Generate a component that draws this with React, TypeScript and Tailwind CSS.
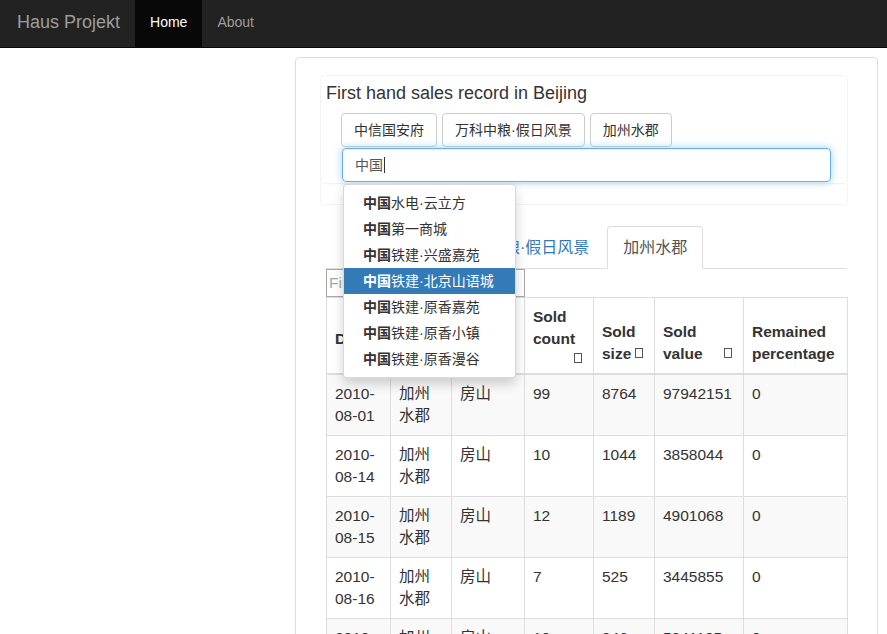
import React from 'react';

const font = "font-['Liberation_Sans','Noto_Sans_CJK_SC',sans-serif]";

const tabs = ['中信国安府', '万科中粮·假日风景', '加州水郡'];

const suggestions = [
  '水电·云立方',
  '第一商城',
  '铁建·兴盛嘉苑',
  '铁建·北京山语城',
  '铁建·原香嘉苑',
  '铁建·原香小镇',
  '铁建·原香漫谷',
];

const rows = [
  ['2010-08-01', '加州水郡', '房山', '99', '8764', '97942151', '0'],
  ['2010-08-14', '加州水郡', '房山', '10', '1044', '3858044', '0'],
  ['2010-08-15', '加州水郡', '房山', '12', '1189', '4901068', '0'],
  ['2010-08-16', '加州水郡', '房山', '7', '525', '3445855', '0'],
  ['2010-08-18', '加州水郡', '房山', '10', '946', '5341105', '0'],
  ['2010-08-21', '加州水郡', '房山', '8', '702', '4102273', '0'],
];

// missing glyphicon renders as an empty box in the screenshot
function SortIcon({ className = '' }: { className?: string }) {
  return <span className={`inline-block w-[8px] h-[10px] border border-[#555] mr-[3px] ${className}`} />;
}

function IconLine() {
  return (
    <div className="flex justify-end h-[15px]">
      <SortIcon className="mt-[3px]" />
    </div>
  );
}

function App() {
  return (
    <div className={`min-h-screen bg-white text-[#333] ${font}`}>
      {/* Navbar */}
      <nav className="h-[48px] bg-[#222] border-b border-[#080808] flex text-[14px]">
        <div className="pl-[17px] pr-[15px] pb-[2px] flex items-center text-[18px] text-[#9d9d9d]">Haus Projekt</div>
        <div className="px-[15px] pb-[2px] flex items-center bg-[#080808] text-white">Home</div>
        <div className="px-[15px] pb-[2px] flex items-center text-[#9d9d9d]">About</div>
      </nav>

      <div className="ml-[295px] mr-[9px] mt-[9px]">
        <div className="border border-[#ddd] rounded-[4px] px-[30px] pt-[17px] pb-[30px]">
          {/* Search box */}
          <div className="-ml-[6px] -mr-[1px] border border-[#f3f3f3] rounded-[4px] pl-[5px] pt-[7px] pb-[1px] shadow-[0_1px_1px_rgba(0,0,0,0.02)]">
            <h3 className="text-[18px] leading-[20px]">First hand sales record in Beijing</h3>
            <div className="ml-[15px] mt-[10px] flex gap-[5px] text-[14px]">
              {tabs.map((t) => (
                <button
                  key={t}
                  className="h-[34px] px-[12px] border border-[#ccc] rounded-[4px] bg-white text-[#333] leading-[20px]"
                >
                  {t}
                </button>
              ))}
            </div>
            <div className="relative ml-[16px] w-[489px] mt-[1px]">
              <div className="h-[34px] px-[12px] border border-[#66afe9] rounded-[4px] flex items-center text-[14px] text-[#555] shadow-[inset_0_1px_1px_rgba(0,0,0,0.075),0_0_8px_rgba(102,175,233,0.6)]">
                中国<span className="inline-block w-px h-[16px] bg-[#333] ml-px" />
              </div>
              {/* Typeahead menu */}
              <ul className="absolute z-10 left-[1px] top-[36px] w-[173px] bg-white border border-[rgba(0,0,0,0.15)] rounded-[4px] py-[5px] shadow-[0_6px_12px_rgba(0,0,0,0.175)] text-[14px]">
                {suggestions.map((s, i) => (
                  <li
                    key={s}
                    className={`h-[26px] pl-[19px] pr-[20px] leading-[26px] whitespace-nowrap ${
                      i === 3 ? 'bg-[#337ab7] text-white' : 'text-[#333]'
                    }`}
                  >
                    <strong>中国</strong>
                    {s}
                  </li>
                ))}
              </ul>
            </div>
          </div>
          <div className="-ml-[6px] -mr-[1px] h-[21px] border border-t-0 border-[#f5f5f5] rounded-b-[4px]" />

          {/* Tabs */}
          <ul className="mt-[21px] flex border-b border-[#ddd] text-[16px]">
            {tabs.map((t, i) => (
              <li key={t} className="-mb-px mr-[2px]">
                <span
                  className={`block px-[15px] py-[10px] leading-[21px] border rounded-t-[4px] ${
                    i === 2 ? 'border-[#ddd] border-b-transparent bg-white text-[#555]' : 'border-transparent text-[#337ab7]'
                  }`}
                >
                  {t}
                </span>
              </li>
            ))}
          </ul>

          <input
            placeholder="Filter..."
            className="block w-[199px] h-[28px] border border-[#a9a9a9] px-[2px] text-[15.5px] outline-none placeholder:text-[#a9a9a9]"
          />

          {/* Table */}
          <table className="w-full table-fixed border-collapse text-[15.5px] leading-[22px]">
            <colgroup>
              <col className="w-[64px]" />
              <col className="w-[61px]" />
              <col className="w-[73px]" />
              <col className="w-[69px]" />
              <col className="w-[61px]" />
              <col className="w-[89px]" />
              <col className="w-[104px]" />
            </colgroup>
            <thead>
              <tr className="text-left font-bold">
                <th className="align-bottom p-2 border border-[#ddd] border-b-2">
                  <div>Date</div>
                  <IconLine />
                </th>
                <th className="align-bottom p-2 border border-[#ddd] border-b-2">
                  <div>Name</div>
                  <IconLine />
                </th>
                <th className="align-bottom p-2 border border-[#ddd] border-b-2">
                  <div>District</div>
                  <IconLine />
                </th>
                <th className="align-bottom p-2 border border-[#ddd] border-b-2">
                  <div>Sold</div>
                  <div>count</div>
                  <IconLine />
                </th>
                <th className="align-bottom p-2 border border-[#ddd] border-b-2">
                  <div>Sold</div>
                  <div className="flex justify-between items-start">
                    size
                    <SortIcon className="mt-[5px]" />
                  </div>
                </th>
                <th className="align-bottom p-2 border border-[#ddd] border-b-2">
                  <div>Sold</div>
                  <div className="flex justify-between items-start">
                    value
                    <SortIcon className="mt-[5px]" />
                  </div>
                </th>
                <th className="align-bottom p-2 border border-[#ddd] border-b-2">Remained percentage</th>
              </tr>
            </thead>
            <tbody>
              {rows.map((r, i) => (
                <tr key={r[0]} className={i % 2 === 0 ? 'bg-[#f9f9f9]' : 'bg-white'}>
                  {r.map((c, j) => (
                    <td key={j} className="align-top p-2 border border-[#ddd] break-words">
                      {c}
                    </td>
                  ))}
                </tr>
              ))}
            </tbody>
          </table>
        </div>
      </div>
    </div>
  );
}

export default App;
